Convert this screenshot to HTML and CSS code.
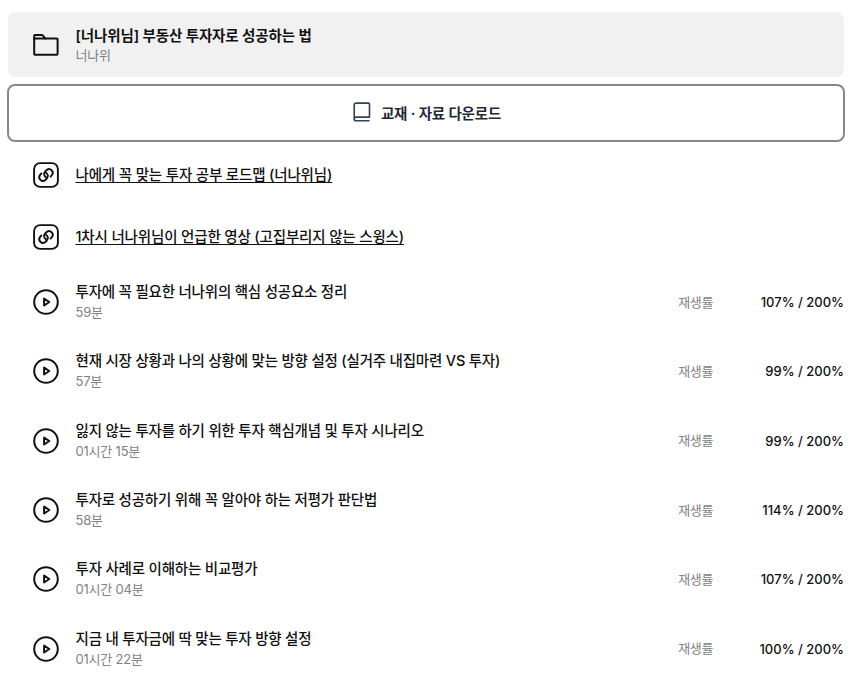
FILE: index.html
```html
<!DOCTYPE html>
<html lang="ko">
<head>
  <meta charset="UTF-8">
  <title>[너나위님] 부동산 투자자로 성공하는 법</title>
  <meta name="viewport" content="width=device-width, initial-scale=1.0">
  <link rel="stylesheet" href="styles.css">
</head>
<body>

  <svg class="sprite" width="0" height="0">
    <symbol id="icon-link" viewBox="0 0 26 26">
      <rect x="1.1" y="1.1" width="23.8" height="23.8" rx="6"/>
      <path d="M8.4 11.5 7.1 12.800a3.700 3.700 0 0 0 5.200 5.200l1.500-1.500a3.700 3.700 0 0 0-.8-5.800"/>
      <path d="M17.600 14.500 18.900 13.200a3.700 3.700 0 0 0-5.200-5.200l-1.500 1.500a3.700 3.700 0 0 0 .8 5.800"/>
    </symbol>
    <symbol id="icon-play" viewBox="0 0 26 26">
      <circle cx="13" cy="13" r="11.8"/>
      <path d="M11.1 9.5v7l5.2-3.5z"/>
    </symbol>
  </svg>

  <main class="course">
    <header class="chapter">
      <svg class="icon" viewBox="0 0 26 26">
        <path d="M1.2 7.3V3.8c0-.5.4-.9.9-.9h6.6c.4 0 .7.1 1 .4l2.5 3.1"/>
        <rect x="1.2" y="6.5" width="23.4" height="16.2" rx=".8"/>
      </svg>
      <div class="info">
        <h1 class="title">[너나위님] 부동산 투자자로 성공하는 법</h1>
        <p class="sub">너나위</p>
      </div>
    </header>

    <button class="download" type="button">
      <svg class="icon-book" viewBox="0 0 18 20">
        <path d="M16.5 15.1V2.2c0-.7-.4-1.1-1.1-1.1H3.2C2 1.1 1.2 1.9 1.2 3.1v13.7M16.5 15.1H3.1c-1.1 0-1.9.8-1.9 1.8s.8 1.8 1.9 1.8H16"/>
      </svg>
      <span>교재 · 자료 다운로드</span>
    </button>

    <ul class="links">
      <li class="link-row">
        <svg class="icon"><use href="#icon-link"/></svg>
        <a class="title" href="#">나에게 꼭 맞는 투자 공부 로드맵 (너나위님)</a>
      </li>
      <li class="link-row">
        <svg class="icon"><use href="#icon-link"/></svg>
        <a class="title" href="#">1차시 너나위님이 언급한 영상 (고집부리지 않는 스윙스)</a>
      </li>
    </ul>

    <ul class="lectures">
      <li class="lecture">
        <svg class="icon"><use href="#icon-play"/></svg>
        <div class="info">
          <p class="title">투자에 꼭 필요한 너나위의 핵심 성공요소 정리</p>
          <p class="sub">59분</p>
        </div>
        <span class="rate-label">재생률</span>
        <span class="rate">107% / 200%</span>
      </li>
      <li class="lecture">
        <svg class="icon"><use href="#icon-play"/></svg>
        <div class="info">
          <p class="title">현재 시장 상황과 나의 상황에 맞는 방향 설정 (실거주 내집마련 VS 투자)</p>
          <p class="sub">57분</p>
        </div>
        <span class="rate-label">재생률</span>
        <span class="rate">99% / 200%</span>
      </li>
      <li class="lecture">
        <svg class="icon"><use href="#icon-play"/></svg>
        <div class="info">
          <p class="title">잃지 않는 투자를 하기 위한 투자 핵심개념 및 투자 시나리오</p>
          <p class="sub">01시간 15분</p>
        </div>
        <span class="rate-label">재생률</span>
        <span class="rate">99% / 200%</span>
      </li>
      <li class="lecture">
        <svg class="icon"><use href="#icon-play"/></svg>
        <div class="info">
          <p class="title">투자로 성공하기 위해 꼭 알아야 하는 저평가 판단법</p>
          <p class="sub">58분</p>
        </div>
        <span class="rate-label">재생률</span>
        <span class="rate">114% / 200%</span>
      </li>
      <li class="lecture">
        <svg class="icon"><use href="#icon-play"/></svg>
        <div class="info">
          <p class="title">투자 사례로 이해하는 비교평가</p>
          <p class="sub">01시간 04분</p>
        </div>
        <span class="rate-label">재생률</span>
        <span class="rate">107% / 200%</span>
      </li>
      <li class="lecture">
        <svg class="icon"><use href="#icon-play"/></svg>
        <div class="info">
          <p class="title">지금 내 투자금에 딱 맞는 투자 방향 설정</p>
          <p class="sub">01시간 22분</p>
        </div>
        <span class="rate-label">재생률</span>
        <span class="rate">100% / 200%</span>
      </li>
    </ul>
  </main>

</body>
</html>
```
FILE: styles.css
```css
* {
  box-sizing: border-box;
}

body {
  margin: 0;
  padding: 12px 9px 0 7px;
  font-family: Inter, "Noto Sans CJK KR", sans-serif;
  background-color: #fff;
  color: #111;
  overflow: hidden;
}

h1, p, ul {
  margin: 0;
  padding: 0;
}

ul {
  list-style: none;
}

.sprite {
  display: block;
}

.icon {
  flex: none;
  width: 26px;
  height: 26px;
  margin-right: 17px;
  fill: none;
  stroke: #111;
  stroke-width: 2;
  stroke-linecap: round;
  stroke-linejoin: round;
}

.info {
  flex: 1;
  min-width: 0;
}

.title {
  font-size: 14.5px;
  font-weight: 500;
  line-height: 22px;
  letter-spacing: -0.2px;
  white-space: nowrap;
}

.sub {
  font-size: 13px;
  line-height: 18px;
  letter-spacing: -0.2px;
  color: #828282;
}

.chapter {
  display: flex;
  align-items: center;
  height: 65px;
  margin-left: 1px;
  padding-left: 24.5px;
  border-radius: 7px;
  background-color: #f1f1f1;
}

.chapter .title {
  font-weight: 600;
  letter-spacing: -0.12px;
}

.chapter .sub {
  margin-top: -1px;
}

.chapter .info {
  padding-bottom: 1px;
}

.download {
  display: flex;
  align-items: center;
  justify-content: center;
  gap: 10px;
  width: 838px;
  height: 58px;
  margin-top: 7px;
  padding: 0 4px 2px 6px;
  border: 2px solid #888;
  border-radius: 8px;
  background-color: #fff;
  color: #1f2937;
  font-family: inherit;
  font-size: 14.5px;
  font-weight: 600;
  letter-spacing: -0.18px;
}

.icon-book {
  width: 18px;
  height: 20px;
  fill: none;
  stroke: #334155;
  stroke-width: 1.6;
  stroke-linecap: round;
  stroke-linejoin: round;
}

.links {
  padding-top: 2px;
}

.link-row {
  display: flex;
  align-items: center;
  height: 62px;
  padding-left: 25.5px;
}

.link-row .icon {
  stroke-width: 1.9;
}

.link-row .title {
  color: #111;
  letter-spacing: -0.16px;
  text-underline-offset: 2px;
}

.lectures {
  margin-top: -0.6px;
}

.lecture {
  display: flex;
  align-items: center;
  height: 69.35px;
  padding-left: 25.5px;
}

.lecture .info {
  padding-bottom: 2px;
}

.rate-label {
  padding-bottom: 2px;
  font-size: 13px;
  letter-spacing: -0.4px;
  color: #828282;
}

.rate {
  width: 131px;
  font-size: 13px;
  font-weight: 500;
  text-align: right;
}
```
